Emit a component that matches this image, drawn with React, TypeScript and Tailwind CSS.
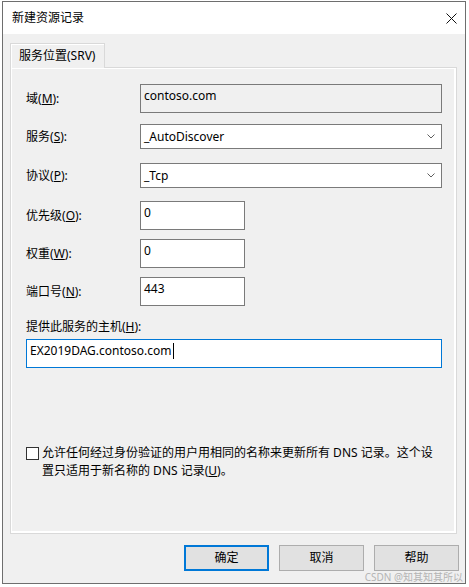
import React from "react";

const font = { fontFamily: '"Noto Sans", "Noto Sans CJK SC", sans-serif' };

function Chevron() {
  return (
    <svg width="8" height="5" viewBox="0 0 8 5" className="shrink-0">
      <polyline points="0.5,0.5 4,4 7.5,0.5" fill="none" stroke="#5f5f5f" strokeWidth="1" />
    </svg>
  );
}

function Label({ text, k }: { text: string; k: string }) {
  return (
    <span className="w-[114px] shrink-0 text-[12px] leading-[16px] text-black">
      {text}(<u>{k}</u>):
    </span>
  );
}

function Edit({ value, width, gray }: { value: string; width: string; gray?: boolean }) {
  return (
    <div
      className={`${width} h-[29px] border border-[#7a7a7a] pl-[3px] pt-[3px] text-[12px] leading-[16px] text-black ${
        gray ? "bg-[#f0f0f0]" : "bg-white"
      }`}
    >
      {value}
    </div>
  );
}

function Combo({ value }: { value: string }) {
  return (
    <div className="w-[302px] h-[25px] border border-[#7a7a7a] bg-white pl-[3px] pr-[6px] flex items-center justify-between text-[12px] leading-[16px] text-black">
      <span>{value}</span>
      <Chevron />
    </div>
  );
}

function Btn({ text, primary }: { text: string; primary?: boolean }) {
  return (
    <button
      className={`w-[85px] h-[26px] bg-[#e1e1e1] text-[12px] text-black flex items-center justify-center ${
        primary ? "border-2 border-[#0078d7]" : "border border-[#adadad]"
      }`}
    >
      {text}
    </button>
  );
}

export default function App() {
  return (
    <div className="relative w-[469px] h-[587px] bg-white" style={font}>
      <div className="ml-[2px] mt-[1px] w-[464px] h-[583px] border border-[#6e6e6e] flex flex-col">
        {/* title bar */}
        <div className="h-[32px] bg-white flex items-center justify-between pl-[9px] pr-[8px]">
          <span className="text-[12px] text-black">新建资源记录</span>
          <svg width="11" height="11" viewBox="0 0 11 11">
            <line x1="0.5" y1="0.5" x2="10.5" y2="10.5" stroke="#111" strokeWidth="1" />
            <line x1="10.5" y1="0.5" x2="0.5" y2="10.5" stroke="#111" strokeWidth="1" />
          </svg>
        </div>

        <div className="flex-1 bg-[#f0f0f0] pt-[9px] flex flex-col">
          {/* tab */}
          <div className="ml-[7px] relative z-10 -mb-px w-[95px] h-[25px] border border-b-0 border-[#d9d9d9] bg-[#f0f0f0] shadow-[inset_1px_1px_0_#fff] flex items-center pl-[8px] text-[12px] text-black">
            服务位置(SRV)
          </div>

          {/* tab panel */}
          <div className="ml-[7px] mr-[8px] h-[467px] border border-[#d9d9d9] shadow-[inset_1px_1px_0_#fff,inset_-2px_-2px_0_#fff] pl-[15px] pt-[16px] flex flex-col">
            <div className="flex items-center">
              <Label text="域" k="M" />
              <Edit value="contoso.com" width="w-[302px]" gray />
            </div>
            <div className="flex items-center mt-[11px]">
              <Label text="服务" k="S" />
              <Combo value="_AutoDiscover" />
            </div>
            <div className="flex items-center mt-[14px]">
              <Label text="协议" k="P" />
              <Combo value="_Tcp" />
            </div>
            <div className="flex items-center mt-[13px]">
              <Label text="优先级" k="O" />
              <Edit value="0" width="w-[105px]" />
            </div>
            <div className="flex items-center mt-[9px]">
              <Label text="权重" k="W" />
              <Edit value="0" width="w-[105px]" />
            </div>
            <div className="flex items-center mt-[9px]">
              <Label text="端口号" k="N" />
              <Edit value="443" width="w-[105px]" />
            </div>
            <div className="mt-[13px] text-[12px] leading-[16px] text-black">
              提供此服务的主机(<u>H</u>):
            </div>
            <div className="mt-[4px] w-[416px] h-[29px] border border-[#0078d7] bg-white pl-[3px] pt-[3px] text-[12px] leading-[16px] text-black flex items-start">
              <span>EX2019DAG.contoso.com</span>
              <span className="ml-px w-px h-[16px] bg-black" />
            </div>

            <div className="mt-[76px] flex items-start gap-[3px]">
              <div className="mt-[3px] w-[13px] h-[13px] shrink-0 border border-[#333] bg-white" />
              <div className="text-[12px] leading-[18px] text-black">
                允许任何经过身份验证的用户用相同的名称来更新所有 DNS 记录。这个设
                <br />
                置只适用于新名称的 DNS 记录(<u>U</u>)。
              </div>
            </div>
          </div>

          {/* buttons */}
          <div className="mt-[11px] flex justify-end gap-[10px] pr-[6px]">
            <Btn text="确定" primary />
            <Btn text="取消" />
            <Btn text="帮助" />
          </div>
        </div>
      </div>
      <span className="absolute right-[6px] bottom-[5px] text-[10px] leading-[12px] text-[#b4b4b4]">
        CSDN @知其知其所以
      </span>
    </div>
  );
}
